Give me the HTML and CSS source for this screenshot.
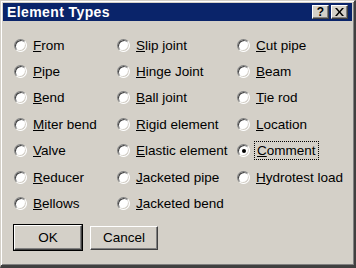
FILE: index.html
```html
<!DOCTYPE html>
<html lang="en">
  <head>
    <meta charset="UTF-8" />
    <title>Element Types</title>
    <link rel="stylesheet" href="styles.css">
  </head>
  <body>
    <div class="window">
      <div class="titlebar">
        <span class="title">Element Types</span>
        <span class="cap-btn help">?</span>
        <span class="cap-btn close">
          <svg width="9" height="8" viewBox="0 0 9 8"><path d="M0 0h2l2.5 3 2.5-3h2l-3.5 4 3.5 4h-2l-2.5-3-2.5 3h-2l3.5-4z" fill="#000"/></svg>
        </span>
      </div>

      <div class="options">
        <label class="opt"><span class="radio"></span><span><u>F</u>rom</span></label>
        <label class="opt"><span class="radio"></span><span><u>S</u>lip joint</span></label>
        <label class="opt"><span class="radio"></span><span><u>C</u>ut pipe</span></label>

        <label class="opt"><span class="radio"></span><span><u>P</u>ipe</span></label>
        <label class="opt"><span class="radio"></span><span><u>H</u>inge Joint</span></label>
        <label class="opt"><span class="radio"></span><span><u>B</u>eam</span></label>

        <label class="opt"><span class="radio"></span><span><u>B</u>end</span></label>
        <label class="opt"><span class="radio"></span><span><u>B</u>all joint</span></label>
        <label class="opt"><span class="radio"></span><span><u>T</u>ie rod</span></label>

        <label class="opt"><span class="radio"></span><span><u>M</u>iter bend</span></label>
        <label class="opt"><span class="radio"></span><span><u>R</u>igid element</span></label>
        <label class="opt"><span class="radio"></span><span><u>L</u>ocation</span></label>

        <label class="opt"><span class="radio"></span><span><u>V</u>alve</span></label>
        <label class="opt"><span class="radio"></span><span><u>E</u>lastic element</span></label>
        <label class="opt"><span class="radio checked"></span><span class="focus"><u>C</u>omment</span></label>

        <label class="opt"><span class="radio"></span><span><u>R</u>educer</span></label>
        <label class="opt"><span class="radio"></span><span><u>J</u>acketed pipe</span></label>
        <label class="opt"><span class="radio"></span><span><u>H</u>ydrotest load</span></label>

        <label class="opt"><span class="radio"></span><span><u>B</u>ellows</span></label>
        <label class="opt"><span class="radio"></span><span><u>J</u>acketed bend</span></label>
        <span></span>
      </div>

      <div class="actions">
        <button class="btn default">OK</button>
        <button class="btn">Cancel</button>
      </div>
    </div>
  </body>
</html>
```

FILE: styles.css
```css
body {
  margin: 0;
  background-color: #d4d0c8;
  font-family: "Liberation Sans", Arial, sans-serif;
}

.window {
  width: 356px;
  height: 268px;
  box-sizing: border-box;
  background-color: #d4d0c8;
  border-top: 1px solid #d4d0c8;
  border-left: 1px solid #d4d0c8;
  border-right: 2px solid #404040;
  border-bottom: 3px solid #404040;
  box-shadow: inset 1px 1px 0 #ffffff, inset -1px -1px 0 #808080;
  padding: 2px;
  display: flex;
  flex-direction: column;
}

.titlebar {
  height: 18px;
  background-color: #0a246a;
  display: flex;
  align-items: center;
  padding: 0 4px 0 4px;
}

.title {
  flex: 1;
  color: #ffffff;
  font-weight: bold;
  font-size: 14px;
  letter-spacing: 0.4px;
}

.cap-btn {
  width: 17px;
  height: 14px;
  box-sizing: border-box;
  background-color: #d4d0c8;
  border-top: 1px solid #ffffff;
  border-left: 1px solid #ffffff;
  border-right: 1px solid #404040;
  border-bottom: 1px solid #404040;
  box-shadow: inset -1px -1px 0 #808080;
  display: flex;
  align-items: center;
  justify-content: center;
  font-weight: bold;
  font-size: 12px;
  line-height: 12px;
}

.help {
  margin-right: 2px;
}

.options {
  display: grid;
  grid-template-columns: 103px 120px 1fr;
  grid-auto-rows: 26.4px;
  padding: 11px 0 0 11px;
}

.opt {
  display: flex;
  align-items: center;
  font-size: 13.5px;
  color: #000000;
  white-space: nowrap;
}

.radio {
  width: 13px;
  height: 13px;
  box-sizing: border-box;
  border-radius: 50%;
  background-color: #ffffff;
  border: 1px solid;
  border-color: #808080 #ffffff #ffffff #808080;
  box-shadow: inset 1px 1px 0 #404040, inset -1px -1px 0 #d4d0c8;
  margin-right: 6px;
  position: relative;
}

.radio.checked::after {
  content: "";
  position: absolute;
  left: 3.5px;
  top: 3.5px;
  width: 4px;
  height: 4px;
  border-radius: 50%;
  background-color: #000000;
}

.focus {
  outline: 1px dotted #000000;
  outline-offset: 1px;
  padding: 0 1px;
}

.actions {
  display: flex;
  gap: 8px;
  padding: 9px 0 0 10px;
}

.btn {
  width: 68px;
  height: 24px;
  box-sizing: border-box;
  background-color: #d4d0c8;
  font-family: "Liberation Sans", Arial, sans-serif;
  font-size: 13.5px;
  color: #000000;
  border-top: 1px solid #ffffff;
  border-left: 1px solid #ffffff;
  border-right: 1px solid #404040;
  border-bottom: 1px solid #404040;
  box-shadow: inset -1px -1px 0 #808080;
  padding: 0;
}

.btn.default {
  outline: 1px solid #000000;
  margin-left: 1px;
  margin-top: -1px;
  height: 25px;
}
```
